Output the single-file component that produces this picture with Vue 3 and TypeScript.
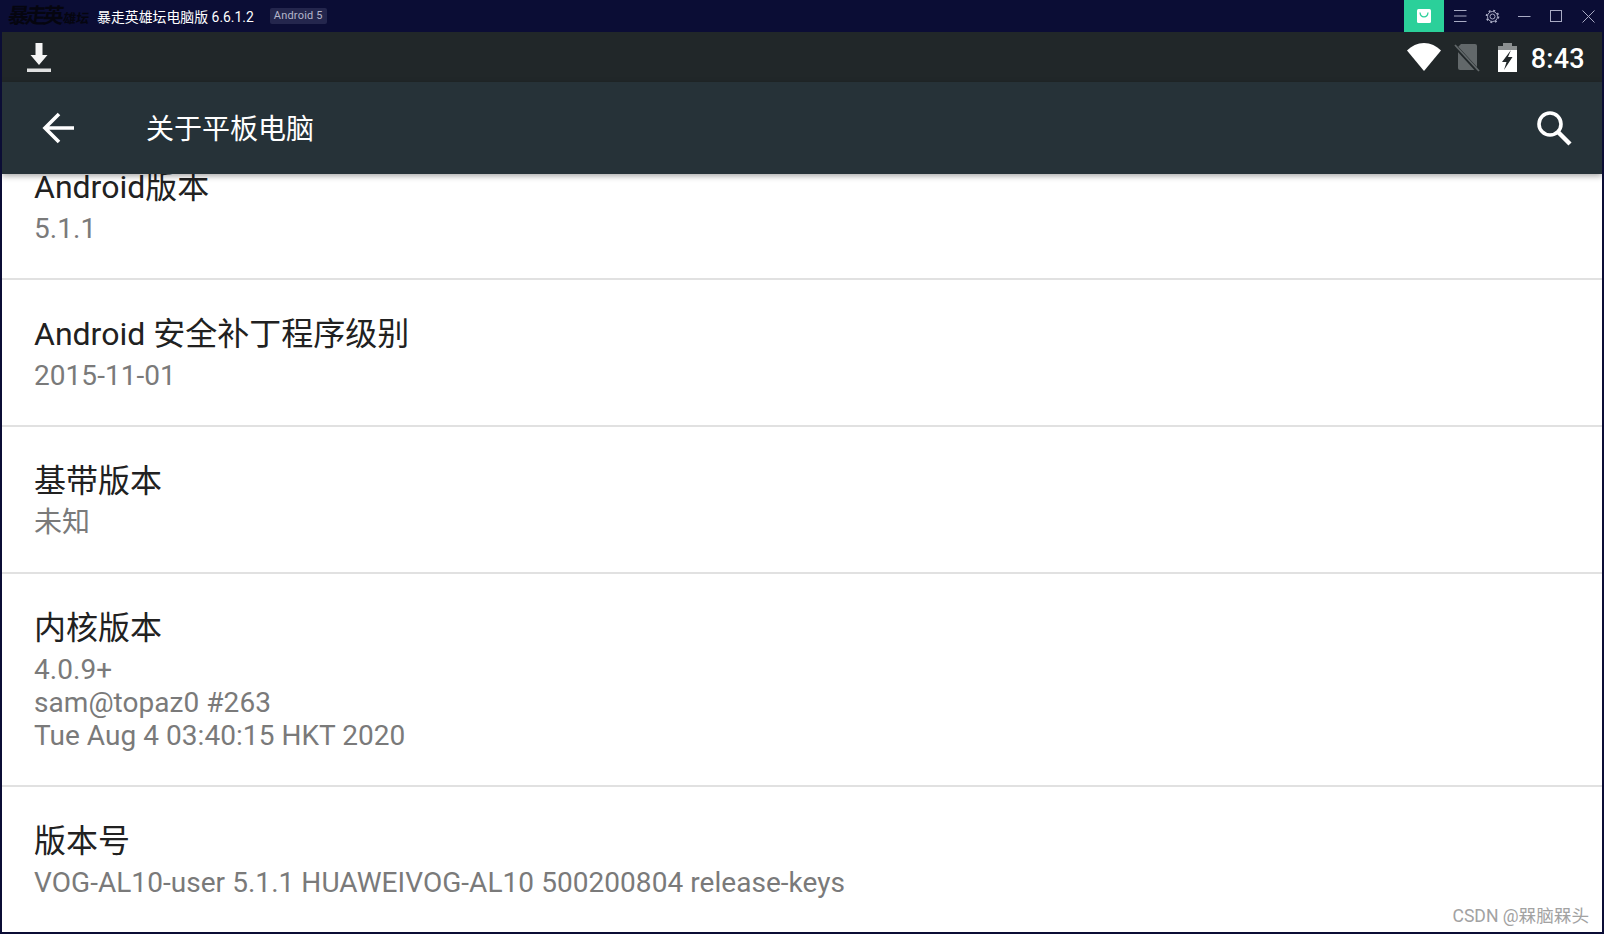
<script setup lang="ts">
interface InfoRow {
  title: string;
  lines: string[];
}

const rows: InfoRow[] = [
  { title: 'Android版本', lines: ['5.1.1'] },
  { title: 'Android 安全补丁程序级别', lines: ['2015-11-01'] },
  { title: '基带版本', lines: ['未知'] },
  { title: '内核版本', lines: ['4.0.9+', 'sam@topaz0 #263', 'Tue Aug 4 03:40:15 HKT 2020'] },
  { title: '版本号', lines: ['VOG-AL10-user 5.1.1 HUAWEIVOG-AL10 500200804 release-keys'] },
];
</script>

<template>
  <div class="window">
    <header class="titlebar">
      <div class="logo"><span class="logo-big">暴走英</span><span class="logo-small">雄坛</span></div>
      <span class="app-name">暴走英雄坛电脑版 6.6.1.2</span>
      <span class="badge">Android 5</span>
      <div class="spacer"></div>
      <div class="shop">
        <svg width="14" height="14" viewBox="0 0 14 14">
          <rect width="14" height="14" rx="1.5" fill="#fff" />
          <path d="M3 3.500c.3 3 2 4.400 4 4.400s3.700-1.400 4-4.400" fill="none" stroke="#2bd09a" stroke-width="1.300" />
        </svg>
      </div>
      <div class="win-btn">
        <svg width="13" height="12" viewBox="0 0 13 12" stroke="#a9abc4" fill="none">
          <path d="M0 .5h12.500M0 6h12.500M0 11.500h12.500" />
        </svg>
      </div>
      <div class="win-btn">
        <svg width="15" height="15" viewBox="0 0 15 15" fill="none" stroke="#a9abc4">
          <circle cx="7.500" cy="7.500" r="2.500" />
          <circle cx="7.500" cy="7.500" r="5" />
          <circle cx="7.500" cy="7.500" r="6" stroke-width="1.600" stroke-dasharray="2 2.710" />
        </svg>
      </div>
      <div class="win-btn">
        <svg width="13" height="12" viewBox="0 0 13 12" stroke="#a9abc4" fill="none"><path d="M0 6.500h12.500" /></svg>
      </div>
      <div class="win-btn">
        <svg width="12" height="12" viewBox="0 0 12 12" stroke="#a9abc4" fill="none"><rect x=".5" y=".5" width="11" height="11" /></svg>
      </div>
      <div class="win-btn">
        <svg width="13" height="13" viewBox="0 0 13 13" stroke="#a9abc4" fill="none"><path d="M.5.500l12 12M12.500.500l-12 12" /></svg>
      </div>
    </header>

    <main class="device">
      <div class="statusbar">
        <svg class="download" width="24" height="30" viewBox="0 0 24 30" fill="#f4f4f4">
          <path d="M8.500 0h7v12h5l-8.500 10-8.500-10h5z" />
          <rect y="25.500" width="24" height="3.500" fill="#dfe0e0" />
        </svg>
        <div class="spacer"></div>
        <svg class="wifi" width="34" height="28" viewBox="0 0 34 28" fill="#fff">
          <path d="M17 28 0 7.500C4.500 3 10.500 0 17 0s12.500 3 17 7.500z" />
        </svg>
        <svg class="sim" width="26" height="30" viewBox="0 0 26 30">
          <path d="M7 1h14a2 2 0 0 1 2 2v22a2 2 0 0 1-2 2H6a2 2 0 0 1-2-2V4z" fill="#62686a" />
          <path d="M1 3l23 25" stroke="#212729" stroke-width="4" />
          <path d="M1 2l24 26" stroke="#62686a" stroke-width="1.800" />
        </svg>
        <svg class="battery" width="19" height="29" viewBox="0 0 19 29">
          <rect x="5" y="0" width="9" height="3" fill="#8b8f90" />
          <rect x="0" y="3" width="19" height="5" fill="#8b8f90" />
          <rect x="0" y="7" width="19" height="22" fill="#fff" />
          <path d="M13 7 4 19h4.500l-2.500 8 8.500-13H10l3-7z" fill="#212729" />
        </svg>
        <span class="clock">8:43</span>
      </div>

      <div class="toolbar">
        <svg class="back" width="32" height="32" viewBox="0 0 32 32" fill="none" stroke="#fff" stroke-width="3.600">
          <path d="M32 16H3M17 2 3 16l14 14" />
        </svg>
        <span class="page-title">关于平板电脑</span>
        <div class="spacer"></div>
        <svg class="search" width="36" height="36" viewBox="0 0 36 36" fill="none" stroke="#fff">
          <circle cx="14" cy="14" r="11" stroke-width="3.600" />
          <path d="M22 22l12 12" stroke-width="4.400" />
        </svg>
      </div>

      <div class="list">
        <div v-for="row in rows" :key="row.title" class="row">
          <div class="row-title">{{ row.title }}</div>
          <div v-for="line in row.lines" :key="line" class="row-sub">{{ line }}</div>
        </div>
      </div>

      <span class="watermark">CSDN @槑脑槑头</span>
    </main>
  </div>
</template>

<style scoped>
.window {
  width: 1604px;
  height: 934px;
  display: flex;
  flex-direction: column;
  overflow: hidden;
  background: #0b0d35;
  font-family: Roboto, "Noto Sans CJK SC", sans-serif;
}

.titlebar {
  height: 32px;
  flex: none;
  display: flex;
  align-items: center;
  background: #0b0d35;
}

.logo {
  width: 97px;
  height: 32px;
  line-height: 32px;
  flex: none;
  padding-left: 8px;
  box-sizing: border-box;
  color: #05050f;
  white-space: nowrap;
  font-weight: 700;
  overflow: hidden;
  transform: skewX(-8deg);
}

.logo-big {
  font-size: 21px;
  letter-spacing: -3.500px;
}

.logo-small {
  font-size: 13px;
  margin-left: 3px;
  letter-spacing: 0;
}

.app-name {
  color: #fff;
  font-size: 13.900px;
  white-space: nowrap;
  margin-top: -1px;
}

.badge {
  margin-left: 16px;
  height: 16px;
  line-height: 16px;
  padding: 0 4px;
  border-radius: 2px;
  background: #24264d;
  color: #b4b6cb;
  font-size: 11px;
  letter-spacing: 0.200px;
}

.spacer {
  flex: 1;
}

.shop {
  width: 40px;
  height: 32px;
  display: flex;
  align-items: center;
  justify-content: center;
  background: #2bd09a;
}

.win-btn {
  width: 32px;
  height: 32px;
  display: flex;
  align-items: center;
  justify-content: center;
}

.device {
  position: relative;
  flex: 1;
  min-height: 0;
  margin: 0 2px 2px;
  display: flex;
  flex-direction: column;
  overflow: hidden;
  background: #fff;
}

.statusbar {
  height: 50px;
  flex: none;
  display: flex;
  align-items: center;
  padding: 0 17px 0 25px;
  background: #212729;
}

.download {
  margin-top: 2px;
}

.wifi {
  margin-right: 1px;
}

.sim {
  margin-left: 12px;
  margin-top: 2px;
}

.battery {
  margin-left: 18px;
}

.clock {
  margin-left: 14px;
  margin-top: 4px;
  color: #fff;
  font-size: 27px;
  font-weight: 500;
  letter-spacing: 0.300px;
}

.toolbar {
  position: relative;
  z-index: 1;
  height: 92px;
  flex: none;
  display: flex;
  align-items: center;
  padding: 0 30px 0 40px;
  background: #263238;
  box-shadow: 0 2px 6px rgba(0, 0, 0, 0.35);
}

.page-title {
  margin-left: 72px;
  margin-top: -2px;
  color: #fff;
  font-size: 28px;
}

.list {
  margin-top: -41px;
}

.row {
  padding: 33px 32px 33px;
  border-bottom: 2px solid #e1e1e1;
}

.row-title {
  height: 46px;
  line-height: 42px;
  color: #212121;
  font-size: 32px;
  white-space: nowrap;
}

.row-sub {
  height: 33px;
  line-height: 33px;
  color: #7a7a7a;
  font-size: 28px;
  letter-spacing: 0.050px;
  white-space: nowrap;
}

.watermark {
  position: absolute;
  right: 13px;
  bottom: 5px;
  color: #a2a2a2;
  font-size: 17.600px;
}
</style>
